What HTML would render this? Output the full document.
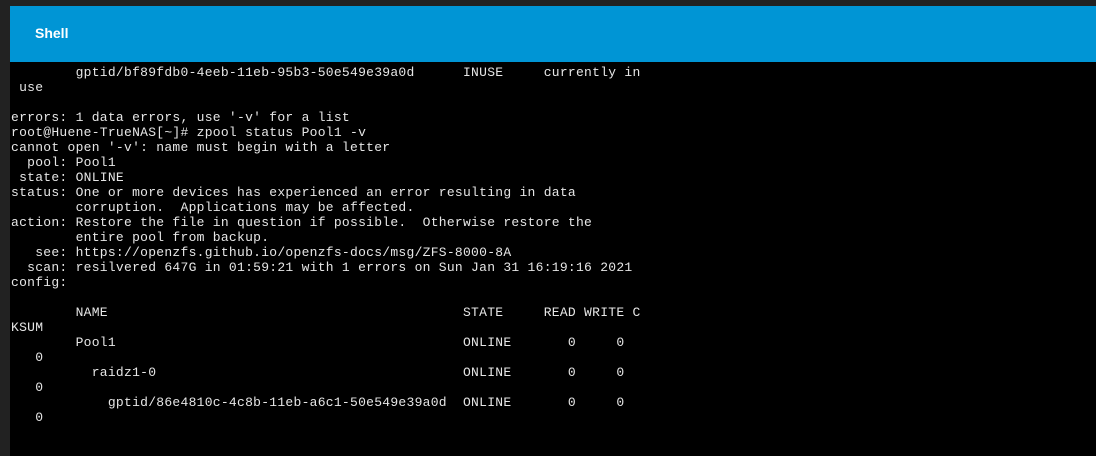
<!DOCTYPE html>
<html><head><meta charset="utf-8"><style>
html,body{margin:0;padding:0;width:1096px;height:456px;overflow:hidden;background:#222;}
.hdr{position:absolute;left:10px;top:6px;width:1086px;height:56px;background:#0095d5;}
.hdr span{position:absolute;left:25px;top:19px;color:#fff;font:bold 14px "Liberation Sans",sans-serif;}
.term{position:absolute;left:10px;top:62px;width:1086px;height:394px;background:#000;}
pre{margin:0;position:absolute;left:1px;top:3px;color:#e6e6e6;font:13px/15px "Courier New","Liberation Mono",monospace;letter-spacing:0.27px;}
</style></head><body>
<div class="hdr"><span>Shell</span></div>
<div class="term"><pre>        gptid/bf89fdb0-4eeb-11eb-95b3-50e549e39a0d      INUSE     currently in
 use

errors: 1 data errors, use '-v' for a list
root@Huene-TrueNAS[~]# zpool status Pool1 -v
cannot open '-v': name must begin with a letter
  pool: Pool1
 state: ONLINE
status: One or more devices has experienced an error resulting in data
        corruption.  Applications may be affected.
action: Restore the file in question if possible.  Otherwise restore the
        entire pool from backup.
   see: https://openzfs.github.io/openzfs-docs/msg/ZFS-8000-8A
  scan: resilvered 647G in 01:59:21 with 1 errors on Sun Jan 31 16:19:16 2021
config:

        NAME                                            STATE     READ WRITE C
KSUM
        Pool1                                           ONLINE       0     0
   0
          raidz1-0                                      ONLINE       0     0
   0
            gptid/86e4810c-4c8b-11eb-a6c1-50e549e39a0d  ONLINE       0     0
   0</pre></div>
</body></html>
